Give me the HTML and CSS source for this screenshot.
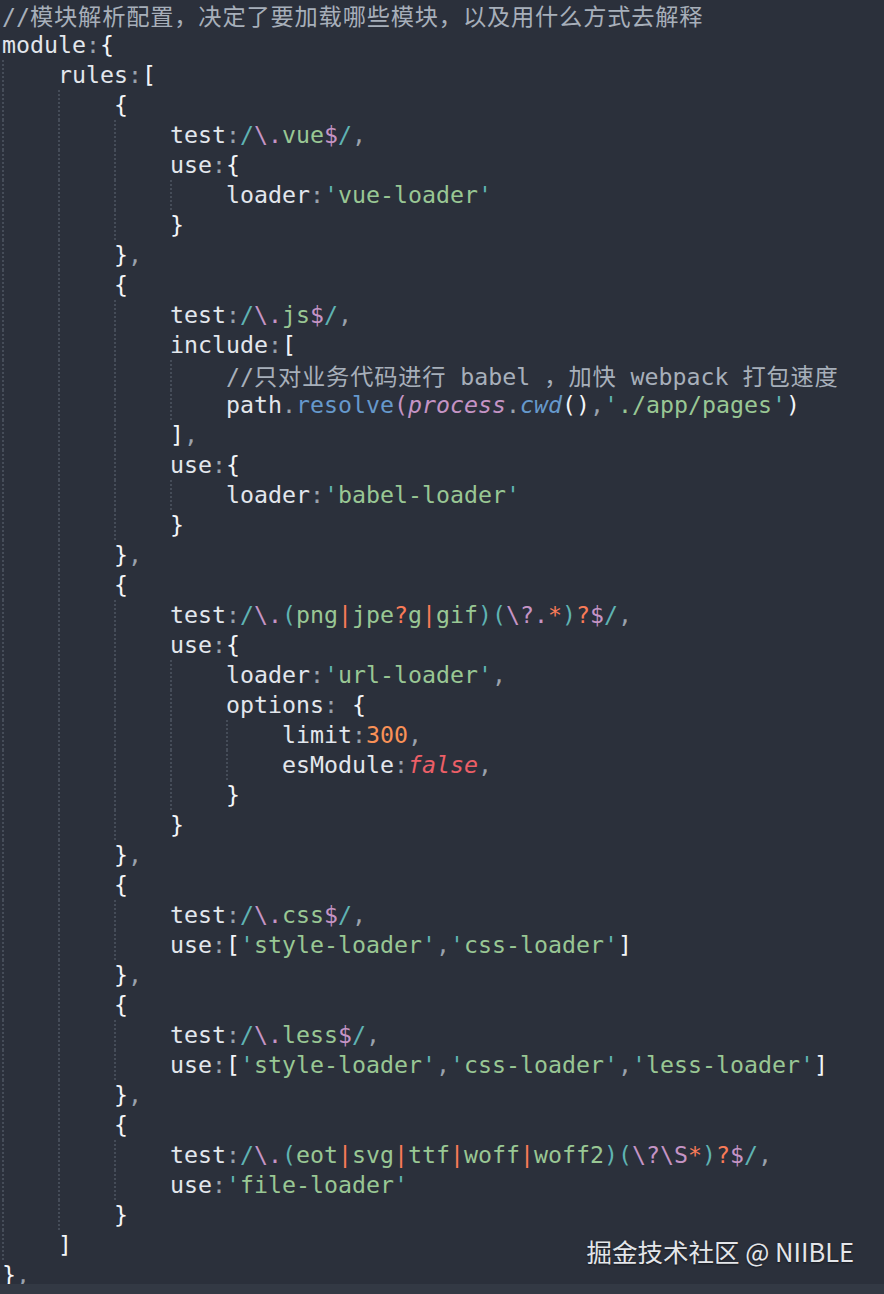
FILE: index.html
```html
<!DOCTYPE html>
<html lang="zh-CN">
<head>
<meta charset="utf-8">
<title>webpack module rules</title>
<link rel="stylesheet" href="styles.css">
</head>
<body>
<div class="editor">
<div class="ln"><span class="c">//<span class="cjk">模块解析配置，决定了要加载哪些模块，以及用什么方式去解释</span></span></div>
<div class="ln"><span class="k">module</span><span class="p">:</span><span class="w">{</span></div>
<div class="ln"><span class="g"></span><span class="k">rules</span><span class="p">:</span><span class="w">[</span></div>
<div class="ln"><span class="g"></span><span class="g"></span><span class="w">{</span></div>
<div class="ln"><span class="g"></span><span class="g"></span><span class="g"></span><span class="k">test</span><span class="p">:</span><span class="r">/</span><span class="e">\.</span><span class="s">vue</span><span class="e">$</span><span class="r">/</span><span class="p">,</span></div>
<div class="ln"><span class="g"></span><span class="g"></span><span class="g"></span><span class="k">use</span><span class="p">:</span><span class="w">{</span></div>
<div class="ln"><span class="g"></span><span class="g"></span><span class="g"></span><span class="g"></span><span class="k">loader</span><span class="p">:</span><span class="q">'</span><span class="s">vue-loader</span><span class="q">'</span></div>
<div class="ln"><span class="g"></span><span class="g"></span><span class="g"></span><span class="w">}</span></div>
<div class="ln"><span class="g"></span><span class="g"></span><span class="w">}</span><span class="p">,</span></div>
<div class="ln"><span class="g"></span><span class="g"></span><span class="w">{</span></div>
<div class="ln"><span class="g"></span><span class="g"></span><span class="g"></span><span class="k">test</span><span class="p">:</span><span class="r">/</span><span class="e">\.</span><span class="s">js</span><span class="e">$</span><span class="r">/</span><span class="p">,</span></div>
<div class="ln"><span class="g"></span><span class="g"></span><span class="g"></span><span class="k">include</span><span class="p">:</span><span class="w">[</span></div>
<div class="ln"><span class="g"></span><span class="g"></span><span class="g"></span><span class="g"></span><span class="c">//<span class="cjk">只对业务代码进行</span> babel <span class="cjk">，加快</span> webpack <span class="cjk">打包速度</span></span></div>
<div class="ln"><span class="g"></span><span class="g"></span><span class="g"></span><span class="g"></span><span class="k">path</span><span class="p">.</span><span class="f">resolve</span><span class="v2">(</span><span class="v">process</span><span class="p">.</span><span class="fi">cwd</span><span class="w">()</span><span class="p">,</span><span class="q">'</span><span class="s">./app/pages</span><span class="q">'</span><span class="w">)</span></div>
<div class="ln"><span class="g"></span><span class="g"></span><span class="g"></span><span class="w">]</span><span class="p">,</span></div>
<div class="ln"><span class="g"></span><span class="g"></span><span class="g"></span><span class="k">use</span><span class="p">:</span><span class="w">{</span></div>
<div class="ln"><span class="g"></span><span class="g"></span><span class="g"></span><span class="g"></span><span class="k">loader</span><span class="p">:</span><span class="q">'</span><span class="s">babel-loader</span><span class="q">'</span></div>
<div class="ln"><span class="g"></span><span class="g"></span><span class="g"></span><span class="w">}</span></div>
<div class="ln"><span class="g"></span><span class="g"></span><span class="w">}</span><span class="p">,</span></div>
<div class="ln"><span class="g"></span><span class="g"></span><span class="w">{</span></div>
<div class="ln"><span class="g"></span><span class="g"></span><span class="g"></span><span class="k">test</span><span class="p">:</span><span class="r">/</span><span class="e">\.</span><span class="r">(</span><span class="s">png</span><span class="o">|</span><span class="s">jpe</span><span class="o">?</span><span class="s">g</span><span class="o">|</span><span class="s">gif</span><span class="r">)(</span><span class="e">\?.</span><span class="o">*</span><span class="r">)</span><span class="o">?</span><span class="e">$</span><span class="r">/</span><span class="p">,</span></div>
<div class="ln"><span class="g"></span><span class="g"></span><span class="g"></span><span class="k">use</span><span class="p">:</span><span class="w">{</span></div>
<div class="ln"><span class="g"></span><span class="g"></span><span class="g"></span><span class="g"></span><span class="k">loader</span><span class="p">:</span><span class="q">'</span><span class="s">url-loader</span><span class="q">'</span><span class="p">,</span></div>
<div class="ln"><span class="g"></span><span class="g"></span><span class="g"></span><span class="g"></span><span class="k">options</span><span class="p">: </span><span class="w">{</span></div>
<div class="ln"><span class="g"></span><span class="g"></span><span class="g"></span><span class="g"></span><span class="g"></span><span class="k">limit</span><span class="p">:</span><span class="n">300</span><span class="p">,</span></div>
<div class="ln"><span class="g"></span><span class="g"></span><span class="g"></span><span class="g"></span><span class="g"></span><span class="k">esModule</span><span class="p">:</span><span class="b">false</span><span class="p">,</span></div>
<div class="ln"><span class="g"></span><span class="g"></span><span class="g"></span><span class="g"></span><span class="w">}</span></div>
<div class="ln"><span class="g"></span><span class="g"></span><span class="g"></span><span class="w">}</span></div>
<div class="ln"><span class="g"></span><span class="g"></span><span class="w">}</span><span class="p">,</span></div>
<div class="ln"><span class="g"></span><span class="g"></span><span class="w">{</span></div>
<div class="ln"><span class="g"></span><span class="g"></span><span class="g"></span><span class="k">test</span><span class="p">:</span><span class="r">/</span><span class="e">\.</span><span class="s">css</span><span class="e">$</span><span class="r">/</span><span class="p">,</span></div>
<div class="ln"><span class="g"></span><span class="g"></span><span class="g"></span><span class="k">use</span><span class="p">:</span><span class="w">[</span><span class="q">'</span><span class="s">style-loader</span><span class="q">'</span><span class="p">,</span><span class="q">'</span><span class="s">css-loader</span><span class="q">'</span><span class="w">]</span></div>
<div class="ln"><span class="g"></span><span class="g"></span><span class="w">}</span><span class="p">,</span></div>
<div class="ln"><span class="g"></span><span class="g"></span><span class="w">{</span></div>
<div class="ln"><span class="g"></span><span class="g"></span><span class="g"></span><span class="k">test</span><span class="p">:</span><span class="r">/</span><span class="e">\.</span><span class="s">less</span><span class="e">$</span><span class="r">/</span><span class="p">,</span></div>
<div class="ln"><span class="g"></span><span class="g"></span><span class="g"></span><span class="k">use</span><span class="p">:</span><span class="w">[</span><span class="q">'</span><span class="s">style-loader</span><span class="q">'</span><span class="p">,</span><span class="q">'</span><span class="s">css-loader</span><span class="q">'</span><span class="p">,</span><span class="q">'</span><span class="s">less-loader</span><span class="q">'</span><span class="w">]</span></div>
<div class="ln"><span class="g"></span><span class="g"></span><span class="w">}</span><span class="p">,</span></div>
<div class="ln"><span class="g"></span><span class="g"></span><span class="w">{</span></div>
<div class="ln"><span class="g"></span><span class="g"></span><span class="g"></span><span class="k">test</span><span class="p">:</span><span class="r">/</span><span class="e">\.</span><span class="r">(</span><span class="s">eot</span><span class="o">|</span><span class="s">svg</span><span class="o">|</span><span class="s">ttf</span><span class="o">|</span><span class="s">woff</span><span class="o">|</span><span class="s">woff2</span><span class="r">)(</span><span class="e">\?\S</span><span class="o">*</span><span class="r">)</span><span class="o">?</span><span class="e">$</span><span class="r">/</span><span class="p">,</span></div>
<div class="ln"><span class="g"></span><span class="g"></span><span class="g"></span><span class="k">use</span><span class="p">:</span><span class="q">'</span><span class="s">file-loader</span><span class="q">'</span></div>
<div class="ln"><span class="g"></span><span class="g"></span><span class="w">}</span></div>
<div class="ln"><span class="g"></span><span class="w">]</span></div>
<div class="ln"><span class="w">}</span><span class="p">,</span></div>
</div>
<div class="watermark">掘金技术社区 @ NIIBLE</div>
<div class="scrollbar"></div>
</body>
</html>
```
FILE: styles.css
```css
html, body {
  margin: 0;
  padding: 0;
  background: #2b303b;
  height: 100%;
  overflow: hidden;
}

.editor {
  font-family: "DejaVu Sans Mono", "Noto Sans CJK SC", monospace;
  font-size: 23.25px;
  line-height: 30px;
  color: #dfe4ea;
  padding-left: 2px;
}

.ln {
  white-space: pre;
  height: 30px;
}

.g {
  display: inline-block;
  width: 4ch;
  height: 30px;
  vertical-align: top;
  box-sizing: border-box;
  border-left: 2px dotted #454c58;
}

.k { color: #e2e6ec; }
.w { color: #f3f5f8; }
.p { color: #9aa2ad; }
.s { color: #99c794; }
.q { color: #5fb3b3; }
.r { color: #5fb3b3; }
.e { color: #c594c5; }
.o { color: #f97b58; }
.n { color: #f99157; }
.b { color: #ec5f67; font-style: italic; }
.f { color: #6699cc; }
.fi { color: #6699cc; font-style: italic; }
.v { color: #c594c5; font-style: italic; }
.v2 { color: #c594c5; }
.c { color: #a7afba; }

.cjk {
  font-family: "Noto Sans CJK SC", sans-serif;
  letter-spacing: 0.8px;
}

.watermark {
  position: absolute;
  right: 30px;
  top: 1233px;
  font-family: "Noto Sans CJK SC", "Noto Sans", sans-serif;
  font-size: 25.5px;
  line-height: 36px;
  color: #e4e6ea;
  text-shadow: 0 1px 2px rgba(0, 0, 0, 0.5);
}

.scrollbar {
  position: absolute;
  left: 0;
  right: 0;
  bottom: 0;
  height: 10px;
  background: #333944;
}
```
